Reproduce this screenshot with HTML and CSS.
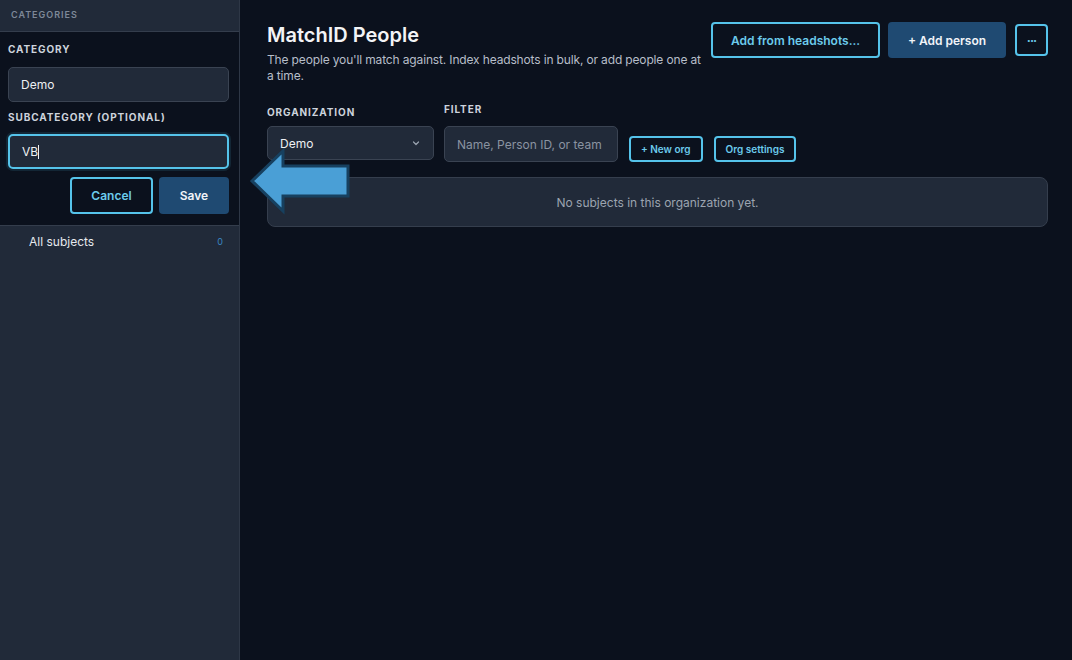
FILE: index.html
```html
<!DOCTYPE html>
<html lang="en">

<head>
  <meta charset="UTF-8">
  <title>MatchID – People</title>
  <meta name="viewport" content="width=device-width, initial-scale=1.0">
  <link rel="stylesheet" href="styles.css">
</head>

<body>
  <!-- Sidebar with categories -->
  <aside class="sidebar">
    <div class="sidebar-head">Categories</div>

    <form class="cat-form">
      <label class="field-label" for="category">Category</label>
      <input class="field" type="text" id="category" value="Demo">

      <label class="field-label sub" for="subcategory">Subcategory (optional)</label>
      <div class="field focused">VB<span class="caret"></span></div>

      <div class="form-actions">
        <button type="button" class="btn btn-outline btn-cancel">Cancel</button>
        <button type="submit" class="btn btn-solid btn-save">Save</button>
      </div>
    </form>

    <ul class="cat-list">
      <li class="cat-item">
        <span>All subjects</span>
        <span class="count">0</span>
      </li>
    </ul>
  </aside>

  <!-- Main content -->
  <main class="main">
    <div class="page-head">
      <div class="title-block">
        <h1>MatchID People</h1>
        <p>The people you'll match against. Index headshots in bulk, or add people one at a time.</p>
      </div>
      <div class="head-actions">
        <button class="btn btn-outline btn-lg btn-headshots">Add from headshots...</button>
        <button class="btn btn-solid btn-lg btn-add">+ Add person</button>
        <button class="btn btn-outline btn-more">···</button>
      </div>
    </div>

    <div class="toolbar">
      <div class="group org-group">
        <label class="field-label" for="org">Organization</label>
        <div class="select">
          <span>Demo</span>
          <svg width="10" height="10" viewBox="0 0 10 10">
            <path d="M2.5 4l2.5 2.5L7.5 4" fill="none" stroke="#9aa3b0" stroke-width="1.2" stroke-linecap="round" stroke-linejoin="round" />
          </svg>
        </div>
      </div>
      <div class="group filter-group">
        <label class="field-label" for="filter">Filter</label>
        <input class="field filter" type="text" id="filter" placeholder="Name, Person ID, or team">
      </div>
      <button class="btn btn-outline btn-sm">+ New org</button>
      <button class="btn btn-outline btn-sm">Org settings</button>
    </div>

    <div class="empty">No subjects in this organization yet.</div>
  </main>

  <!-- Pointer arrow -->
  <svg class="pointer" width="104" height="68" viewBox="248 148 104 68">
    <polygon points="252,181 283,151 283,166 348,166 348,196 283,196 283,211" fill="#4a9fd6" stroke="#17405f" stroke-width="3" stroke-linejoin="miter" />
  </svg>
</body>

</html>
```

FILE: styles.css
```css
/* Base */
* {
  box-sizing: border-box;
}

body {
  margin: 0;
  height: 660px;
  display: flex;
  font-family: 'Inter', 'Liberation Sans', sans-serif;
  background-color: #0b111d;
  color: #e5e7eb;
  position: relative;
  overflow: hidden;
}

button,
input {
  font-family: inherit;
}

/* Sidebar */
.sidebar {
  width: 240px;
  flex-shrink: 0;
  background-color: #212a39;
  border-right: 1px solid #2e3746;
  display: flex;
  flex-direction: column;
}

.sidebar-head {
  height: 32px;
  padding: 9px 11px 0;
  font-size: 9px;
  font-weight: 600;
  letter-spacing: 1px;
  text-transform: uppercase;
  color: #7e8898;
  border-bottom: 1px solid #343d4c;
}

.cat-form {
  background-color: #0b111d;
  padding: 11px 10px 11px 8px;
  border-bottom: 1px solid #343d4c;
  display: flex;
  flex-direction: column;
}

.field-label {
  display: block;
  font-size: 10px;
  font-weight: 700;
  letter-spacing: 0.9px;
  line-height: 12px;
  text-transform: uppercase;
  color: #cdd3dc;
  margin-bottom: 12px;
}

.field-label.sub {
  margin-top: 9px;
  margin-bottom: 11px;
}

.field {
  height: 35px;
  width: 100%;
  padding: 0 12px;
  background-color: #212a39;
  border: 1px solid #3a4352;
  border-radius: 5px;
  color: #eef0f3;
  font-size: 12px;
  outline: none;
}

.field.focused {
  display: flex;
  align-items: center;
  border: 2px solid #55c3ea;
  box-shadow: 0 0 0 2px rgba(85, 195, 234, 0.12);
}

/* text caret after the typed value */
.caret {
  width: 1px;
  height: 14px;
  background-color: #eef0f3;
}

.form-actions {
  display: flex;
  justify-content: flex-end;
  gap: 6px;
  margin-top: 8px;
}

/* Buttons */
.btn {
  border-radius: 4px;
  font-size: 12px;
  font-weight: 600;
  cursor: pointer;
  padding: 0;
}

.btn-outline {
  background-color: #0b111d;
  border: 2px solid #55c3ea;
  color: #6ccbec;
}

.btn-solid {
  background-color: #1f4a72;
  border: none;
  color: #f1f4f8;
}

.btn-cancel {
  width: 83px;
  height: 37px;
}

.btn-save {
  width: 70px;
  height: 37px;
}

.btn-lg {
  height: 36px;
}

.btn-headshots {
  width: 169px;
}

.btn-add {
  width: 118px;
}

.btn-more {
  width: 33px;
  height: 32px;
  margin-top: 2px;
  margin-left: 1px;
  font-size: 13px;
  letter-spacing: -1px;
}

.btn-sm {
  height: 26px;
  font-size: 10px;
  padding: 0 10px;
}

/* Category list */
.cat-list {
  list-style: none;
  margin: 0;
  padding: 0;
}

.cat-item {
  display: flex;
  justify-content: space-between;
  align-items: center;
  height: 30px;
  padding: 0 16px 0 29px;
  font-size: 12px;
  color: #e6e9ee;
}

.cat-item .count {
  font-size: 9px;
  color: #3a86c2;
}

/* Main */
.main {
  flex: 1;
  padding: 22px 24px 0 27px;
}

.page-head {
  display: flex;
}

.title-block {
  flex: 1;
  min-width: 0;
}

.title-block h1 {
  margin: 0;
  font-size: 20px;
  line-height: 26px;
  font-weight: 600;
  color: #f3f4f6;
}

.title-block p {
  margin: 4px 0 0;
  max-width: 436px;
  font-size: 12px;
  line-height: 16px;
  letter-spacing: -0.15px;
  color: #b7bec9;
}

.head-actions {
  display: flex;
  align-items: flex-start;
  gap: 8px;
  flex-shrink: 0;
}

/* Organization / filter row */
.toolbar {
  display: flex;
  align-items: flex-end;
  gap: 10px;
  margin-top: 19px;
}

.org-group .field-label {
  margin-top: 3px;
  margin-bottom: 8px;
}

.filter-group .field-label {
  margin-bottom: 11px;
}

.toolbar .btn-sm {
  margin-left: 1px;
}

.select {
  width: 167px;
  height: 34px;
  margin-bottom: 2px;
  display: flex;
  align-items: center;
  justify-content: space-between;
  padding: 0 12px;
  background-color: #212a39;
  border: 1px solid #3a4352;
  border-radius: 5px;
  font-size: 12px;
  color: #eef0f3;
}

.filter {
  width: 174px;
  height: 36px;
  padding: 0 12px;
}

.filter::placeholder {
  color: #8a93a1;
}

/* Empty state */
.empty {
  margin-top: 15px;
  height: 50px;
  display: flex;
  align-items: center;
  justify-content: center;
  background-color: #212a39;
  border: 1px solid #353e4d;
  border-radius: 8px;
  font-size: 12px;
  color: #9ca4b0;
}

/* Arrow overlay */
.pointer {
  position: absolute;
  left: 248px;
  top: 148px;
}
```
